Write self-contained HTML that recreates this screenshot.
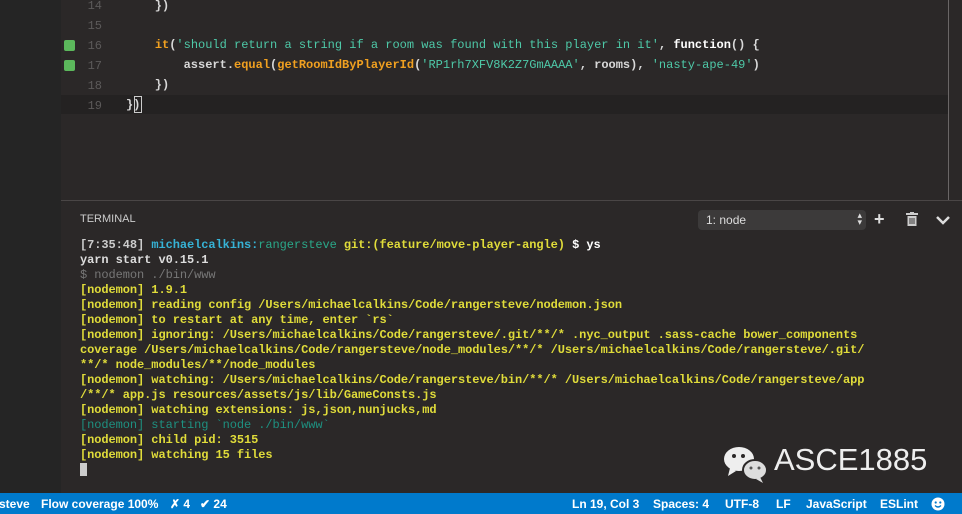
<!DOCTYPE html>
<html><head><meta charset="utf-8"><style>
*{margin:0;padding:0;box-sizing:border-box}
body{width:962px;height:514px;overflow:hidden;background:#2b2828;position:relative;font-family:"Liberation Mono",monospace}
.side{position:absolute;left:0;top:0;width:61px;height:493px;background:#252525}
.ln{position:absolute;left:70px;width:32px;text-align:right;color:#5c5a5a;font-size:12px}
.code{position:absolute;left:126px;font-size:12px;color:#d8d8d8;white-space:pre;font-weight:bold}
.g{position:absolute;left:64px;width:11px;height:11px;background:#5cb85c;border-radius:2px}
.s{color:#4ec9a8;font-weight:normal}
.y{color:#f0a020}
.w{color:#fff}
.t{position:absolute;left:80px;font-size:12px;white-space:pre;color:#e0dc3a;font-weight:bold;line-height:15px;letter-spacing:-0.07px}
.sb{position:absolute;left:0;top:493px;width:962px;height:21px;background:#007acc;color:#fff;font-family:"Liberation Sans",sans-serif;font-size:12px;font-weight:bold}
.sb span{position:absolute;top:4px}
</style></head><body>
<div class="side"></div>
<div style="position:absolute;left:61px;top:95px;width:887px;height:19px;background:#242222"></div>
<div style="position:absolute;left:948px;top:0;width:1px;height:200px;background:#6a6666"></div>
<div style="position:absolute;left:61px;top:200px;width:901px;height:1px;background:#4a4646"></div>
<div class="ln" style="top:-1px">14</div>
<div class="ln" style="top:19px">15</div>
<div class="ln" style="top:39px">16</div>
<div class="ln" style="top:59px">17</div>
<div class="ln" style="top:79px">18</div>
<div class="ln" style="top:99px">19</div>
<div class="g" style="top:40px"></div><div class="g" style="top:60px"></div>
<div class="code" style="top:-1px">    })</div>
<div class="code" style="top:38px">    <span class="y">it</span>(<span class="s">'should return a string if a room was found with this player in it'</span>, <span class="w">function</span>() {</div>
<div class="code" style="top:58px">        assert.<span class="y">equal</span>(<span class="y">getRoomIdByPlayerId</span>(<span class="s">'RP1rh7XFV8K2Z7GmAAAA'</span>, rooms), <span class="s">'nasty-ape-49'</span>)</div>
<div class="code" style="top:78px">    })</div>
<div class="code" style="top:98px">})</div>
<div style="position:absolute;left:134px;top:96px;width:8px;height:17px;border:1px solid #ccc"></div>
<div style="position:absolute;left:80px;top:213px;font-family:'Liberation Sans',sans-serif;font-size:11px;color:#ccc">TERMINAL</div>
<div style="position:absolute;left:698px;top:210px;width:168px;height:20px;background:#3c3a3a;border-radius:4px;color:#ddd;font-family:'Liberation Sans',sans-serif;font-size:12px;padding:3px 8px">1: node<span style="position:absolute;right:4px;top:2px;font-size:9px;line-height:7px">▴<br>▾</span></div>
<div style="position:absolute;left:874px;top:209px;color:#ddd;font:bold 18px 'Liberation Sans',sans-serif">+</div>
<svg style="position:absolute;left:906px;top:212px" width="12" height="14"><rect x="0" y="1" width="12" height="2" fill="#ccc"/><rect x="4" y="0" width="4" height="2" fill="#ccc"/><rect x="1.5" y="4" width="9" height="10" fill="#ccc"/><path d="M4 6v6M6 6v6M8 6v6" stroke="#3a3838" stroke-width="1"/></svg>
<svg style="position:absolute;left:936px;top:216px" width="14" height="9"><path d="M1 1l6 6 6-6" stroke="#ddd" stroke-width="2.5" fill="none"/></svg>
<div class="t" style="top:238px"><span style="color:#ccc">[7:35:48] </span><span style="color:#36b3d6">michaelcalkins:</span><span style="color:#2aa889;font-weight:normal">rangersteve</span> git:(feature/move-player-angle) <span style="color:#fff">$ ys</span></div>
<div class="t" style="top:253px;color:#ddd">yarn start v0.15.1</div>
<div class="t" style="top:268px;color:#777;font-weight:normal">$ nodemon ./bin/www</div>
<div class="t" style="top:283px">[nodemon] 1.9.1
[nodemon] reading config /Users/michaelcalkins/Code/rangersteve/nodemon.json
[nodemon] to restart at any time, enter `rs`
[nodemon] ignoring: /Users/michaelcalkins/Code/rangersteve/.git/**/* .nyc_output .sass-cache bower_components
coverage /Users/michaelcalkins/Code/rangersteve/node_modules/**/* /Users/michaelcalkins/Code/rangersteve/.git/
**/* node_modules/**/node_modules
[nodemon] watching: /Users/michaelcalkins/Code/rangersteve/bin/**/* /Users/michaelcalkins/Code/rangersteve/app
/**/* app.js resources/assets/js/lib/GameConsts.js
[nodemon] watching extensions: js,json,nunjucks,md
<span style="color:#1e9080;font-weight:normal">[nodemon] starting `node ./bin/www`</span>
[nodemon] child pid: 3515
[nodemon] watching 15 files</div>
<div style="position:absolute;left:80px;top:463px;width:7px;height:13px;background:#ccc"></div>
<svg style="position:absolute;left:722px;top:444px" width="48" height="40"><ellipse cx="17" cy="15" rx="15" ry="12" fill="#eee"/><path d="M8 24l-2 8 8-5z" fill="#eee"/><ellipse cx="33" cy="26" rx="12" ry="10" fill="#ddd" stroke="#2b2828" stroke-width="2"/><path d="M38 33l3 6-7-4z" fill="#ddd"/><circle cx="12" cy="12" r="2" fill="#2b2828"/><circle cx="21" cy="12" r="2" fill="#2b2828"/><circle cx="29" cy="24" r="1.5" fill="#555"/><circle cx="37" cy="24" r="1.5" fill="#555"/></svg>
<div style="position:absolute;left:774px;top:442px;font-family:'Liberation Sans',sans-serif;font-size:31px;color:#eee">ASCE1885</div>
<div class="sb">
<span style="left:-1px">steve</span><span style="left:41px">Flow coverage 100%</span><span style="left:170px">✗ 4</span><span style="left:200px">✔ 24</span>
<span style="left:572px">Ln 19, Col 3</span><span style="left:653px">Spaces: 4</span><span style="left:725px">UTF-8</span><span style="left:776px">LF</span><span style="left:806px">JavaScript</span><span style="left:880px">ESLint</span>
</div>
<svg style="position:absolute;left:931px;top:497px" width="14" height="14"><circle cx="7" cy="7" r="6.5" fill="#fff"/><circle cx="4.7" cy="5.5" r="1.1" fill="#007acc"/><circle cx="9.3" cy="5.5" r="1.1" fill="#007acc"/><path d="M4 8.5q3 3 6 0" stroke="#007acc" stroke-width="1.3" fill="none"/></svg>
</body></html>
